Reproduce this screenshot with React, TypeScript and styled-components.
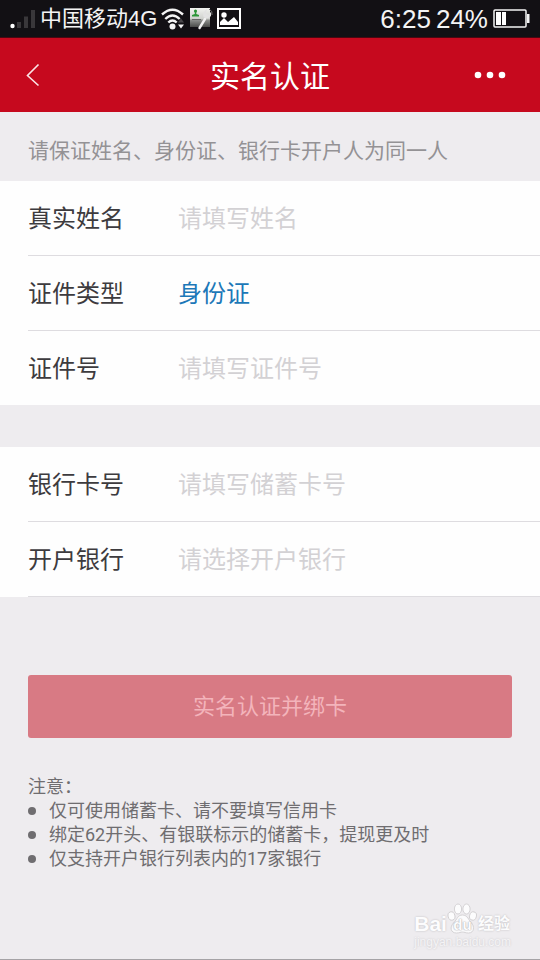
import React from "react";
import styled, { createGlobalStyle } from "styled-components";

const GlobalStyle = createGlobalStyle`
  *, *::before, *::after { box-sizing: border-box; }
  body {
    margin: 0;
    background: #eeecef;
    font-family: Roboto, "Noto Sans CJK SC", sans-serif;
  }
  input, select, button { font-family: inherit; }
`;

const Page = styled.div`
  position: relative;
  display: flex;
  flex-direction: column;
  min-height: 100vh;
  background: #eeecef;
  border-bottom: 1px solid #a5a3a6;
`;

const StatusBar = styled.div`
  display: flex;
  align-items: center;
  justify-content: space-between;
  height: 38px;
  padding: 0 10px;
  background: #121014;
  border-bottom: 1px solid #4a0710;
  color: #f4f4f4;
  font-family: "Liberation Sans", "Noto Sans CJK SC", sans-serif;
`;

const StatusGroup = styled.div<{ $gap: number }>`
  display: flex;
  align-items: center;
  gap: ${(p) => p.$gap}px;
`;

const Carrier = styled.span`
  font-size: 22px;
  line-height: 36px;
  white-space: nowrap;
`;

const StatusText = styled.span`
  font-size: 26px;
  line-height: 38px;
`;

const TitleBar = styled.header`
  display: grid;
  grid-template-columns: 80px 1fr 80px;
  align-items: center;
  height: 74px;
  background: #c6091e;
`;

const Title = styled.h1`
  margin: 0;
  padding-top: 4px;
  color: #fff;
  font-size: 30px;
  line-height: 40px;
  font-weight: 400;
  text-align: center;
`;

const IconButton = styled.button<{ $end?: boolean }>`
  display: flex;
  align-items: center;
  justify-content: ${(p) => (p.$end ? "flex-end" : "flex-start")};
  height: 74px;
  padding: ${(p) => (p.$end ? "0 34px 0 0" : "0 0 0 26px")};
  border: 0;
  background: none;
  color: #fff;
`;

const Notice = styled.p`
  margin: 0;
  padding: 24px 28px 15px;
  color: #949295;
  font-size: 21px;
  line-height: 30px;
`;

const Form = styled.form`
  display: flex;
  flex-direction: column;
`;

const Section = styled.div`
  padding-left: 28px;
  background: #fefefe;
  & + & { margin-top: 42px; }
`;

const Row = styled.div<{ $plain?: boolean }>`
  display: flex;
  align-items: center;
  height: ${(p) => (p.$plain ? 74 : 75)}px;
  padding-top: 2px;
  border-bottom: ${(p) => (p.$plain ? "0" : "1px solid #dedce0")};
`;

const Label = styled.label`
  flex: none;
  width: 150px;
  color: #3d3b3e;
  font-size: 24px;
  line-height: 36px;
`;

const TextField = styled.input`
  flex: 1;
  min-width: 0;
  height: 48px;
  padding: 0;
  border: 0;
  outline: 0;
  background: none;
  color: #3d3b3e;
  font-size: 24px;
  &::placeholder { color: #d3d1d4; opacity: 1; }
`;

const SelectField = styled.select<{ $empty?: boolean }>`
  flex: 1;
  min-width: 0;
  height: 48px;
  padding: 0;
  border: 0;
  outline: 0;
  appearance: none;
  background: none;
  color: ${(p) => (p.$empty ? "#d3d1d4" : "#1c78b8")};
  font-size: 24px;
`;

const Submit = styled.button`
  height: 63px;
  margin: 78px 28px 0;
  padding: 0;
  border: 0;
  border-radius: 3px;
  background: #d87a84;
  color: #f3b4bb;
  font-size: 22px;
  line-height: 32px;
`;

const Notes = styled.section`
  margin: 37px 28px 0;
  color: #6f6d70;
  font-size: 18px;
  line-height: 24px;
`;

const NotesTitle = styled.p`
  margin: 0;
`;

const NotesList = styled.ul`
  margin: 0;
  padding: 0;
  list-style: none;
`;

const Note = styled.li`
  display: flex;
  align-items: center;
  gap: 13px;
  &::before {
    content: "";
    flex: none;
    width: 8px;
    height: 8px;
    border-radius: 50%;
    background: #6f6d70;
  }
`;

const Watermark = styled.div`
  position: absolute;
  right: 29px;
  bottom: 10px;
  color: #fcfcfd;
  font-family: "Liberation Sans", "Noto Sans CJK SC", sans-serif;
  text-shadow: 0 0 2px #b8b6b9;
`;

const Brand = styled.div`
  display: flex;
  align-items: flex-end;
  font-size: 21px;
  font-weight: 700;
  line-height: 22px;
`;

const PawMark = styled.span`
  display: grid;
  justify-items: center;
  align-items: end;
  & > * { grid-area: 1 / 1; }
`;

const PawText = styled.span`
  color: #fcfcfd;
  font-size: 15px;
  line-height: 20px;
  text-shadow: 0 0 1px #a9a7aa, 0 0 2px #b5b3b6;
`;

const BrandName = styled.span`
  font-size: 16px;
`;

const Site = styled.div`
  color: #f5f4f6;
  font-size: 12px;
  line-height: 14px;
  text-shadow: 0 0 2px #c4c2c5;
`;

const SignalIcon = () => (
  <svg width="26" height="20" viewBox="0 0 26 20" aria-hidden="true">
    <circle cx="2.5" cy="17" r="2.2" fill="#fff" />
    <path d="M7 13h4v6H7zM14 7.500h4V19h-4zM21 1h4v18h-4z" fill="#39373a" />
  </svg>
);

const WifiIcon = () => (
  <svg width="25" height="22" viewBox="0 0 25 22" aria-hidden="true">
    <g fill="none" stroke="#f4f4f4" strokeWidth="2.4">
      <path d="M1 6.500Q11.500-3 22 6.500" />
      <path d="M4.300 11Q11.500 4 18.700 11" />
      <path d="M7.300 14.500Q11.500 10.500 15.700 14.500" />
    </g>
    <circle cx="11.500" cy="18.500" r="3" fill="#f4f4f4" />
    <path d="M17 16.500h6l-3 4z" fill="#f4f4f4" />
    <path d="M17 14.500h6l-3-4z" fill="#49474a" />
  </svg>
);

const ToolIcon = () => (
  <svg width="23" height="22" viewBox="0 0 23 22" aria-hidden="true">
    <defs>
      <linearGradient id="card-shade" x1="0" y1="0" x2="0" y2="1">
        <stop offset="0" stopColor="#f2f3f0" />
        <stop offset=".55" stopColor="#d0d2ce" />
        <stop offset=".65" stopColor="#8b8d8a" />
        <stop offset="1" stopColor="#4a4b49" />
      </linearGradient>
    </defs>
    <path d="M0 0h20v19H0z" fill="url(#card-shade)" />
    <path d="M2 11.500h9" stroke="#666" />
    <circle cx="5.500" cy="3" r="1.600" fill="#2d9638" />
    <path d="M4.800 4h1.500v2l2.700 1v1.500H2V7l2.800-1z" fill="#2d9638" />
    <path d="M9.500 20l5.500-9" stroke="#f1f1f1" strokeWidth="2.400" strokeLinecap="round" />
    <path d="M17 1q-5 3-3.500 8 4 3 7.500-1V4l-3 3-2-2z" fill="#e2e2e2" />
    <path d="M19 1q4 2 3 6" fill="none" stroke="#777" />
  </svg>
);

const PictureIcon = () => (
  <svg width="24" height="21" viewBox="0 0 24 21" aria-hidden="true">
    <rect x="1" y="1" width="22" height="19" fill="none" stroke="#fff" strokeWidth="2" />
    <circle cx="7" cy="7" r="2.700" fill="#fff" />
    <path d="M3 17v-3l4-4 4 4 6-5 4 5v3z" fill="#fff" />
  </svg>
);

const BatteryIcon = () => (
  <svg width="37" height="19" viewBox="0 0 37 19" aria-hidden="true">
    <rect x="1" y="1" width="32" height="17" rx="1" fill="none" stroke="#f4f4f4" strokeWidth="1.500" />
    <path d="M3 3h5v13H3zM9 3h4v13H9z" fill="#fff" />
    <path d="M34 5h2.500v9H34z" fill="#f4f4f4" />
  </svg>
);

const BackIcon = () => (
  <svg width="14" height="24" viewBox="0 0 14 24" fill="none" aria-hidden="true">
    <path d="M12.500 1.500L1.500 12.500l11 10" stroke="#fbe4e6" strokeWidth="1.600" />
  </svg>
);

const MoreIcon = () => (
  <svg width="32" height="8" viewBox="0 0 32 8" fill="#fff" aria-hidden="true">
    <circle cx="4" cy="4" r="3.300" />
    <circle cx="16" cy="4" r="3.300" />
    <circle cx="28" cy="4" r="3.300" />
  </svg>
);

const PawIcon = () => (
  <svg width="31" height="32" viewBox="0 0 30 32" fill="#fcfcfd" stroke="#cbc9cc" strokeWidth=".8" aria-hidden="true">
    <ellipse cx="4" cy="13" rx="3.400" ry="4.200" transform="rotate(-15 4 13)" />
    <ellipse cx="10.500" cy="6" rx="3.600" ry="5" />
    <ellipse cx="19" cy="6" rx="3.600" ry="5" />
    <ellipse cx="25.500" cy="13" rx="3.400" ry="4.200" transform="rotate(15 25.500 13)" />
    <path d="M15 12c5 0 6 5 9 8s3 10-3 10c-3 0-4-1-6-1s-3 1-6 1c-6 0-7-6-3-10s4-8 9-8z" />
  </svg>
);

export default function App() {
  return (
    <Page lang="zh-CN">
      <GlobalStyle />
      <StatusBar>
        <StatusGroup $gap={4}>
          <SignalIcon />
          <Carrier>中国移动4G</Carrier>
          <WifiIcon />
          <ToolIcon />
          <PictureIcon />
        </StatusGroup>
        <StatusGroup $gap={5}>
          <StatusText>6:25</StatusText>
          <StatusText>24%</StatusText>
          <BatteryIcon />
        </StatusGroup>
      </StatusBar>
      <TitleBar>
        <IconButton type="button" aria-label="返回"><BackIcon /></IconButton>
        <Title>实名认证</Title>
        <IconButton type="button" aria-label="更多" $end><MoreIcon /></IconButton>
      </TitleBar>
      <Notice>请保证姓名、身份证、银行卡开户人为同一人</Notice>
      <Form>
        <Section>
          <Row>
            <Label htmlFor="name">真实姓名</Label>
            <TextField id="name" placeholder="请填写姓名" />
          </Row>
          <Row>
            <Label htmlFor="idType">证件类型</Label>
            <SelectField id="idType" defaultValue="id">
              <option value="id">身份证</option>
            </SelectField>
          </Row>
          <Row $plain>
            <Label htmlFor="idNumber">证件号</Label>
            <TextField id="idNumber" placeholder="请填写证件号" />
          </Row>
        </Section>
        <Section>
          <Row>
            <Label htmlFor="card">银行卡号</Label>
            <TextField id="card" inputMode="numeric" placeholder="请填写储蓄卡号" />
          </Row>
          <Row>
            <Label htmlFor="bank">开户银行</Label>
            <SelectField id="bank" defaultValue="" $empty>
              <option value="">请选择开户银行</option>
            </SelectField>
          </Row>
        </Section>
        <Submit type="submit" disabled>实名认证并绑卡</Submit>
      </Form>
      <Notes>
        <NotesTitle>注意：</NotesTitle>
        <NotesList>
          <Note>仅可使用储蓄卡、请不要填写信用卡</Note>
          <Note>绑定62开头、有银联标示的储蓄卡，提现更及时</Note>
          <Note>仅支持开户银行列表内的17家银行</Note>
        </NotesList>
      </Notes>
      <Watermark>
        <Brand>
          Bai
          <PawMark>
            <PawIcon />
            <PawText>du</PawText>
          </PawMark>
          <BrandName>经验</BrandName>
        </Brand>
        <Site>jingyan.baidu.com</Site>
      </Watermark>
    </Page>
  );
}
